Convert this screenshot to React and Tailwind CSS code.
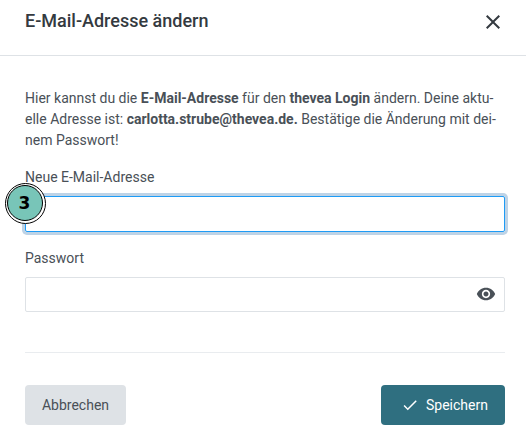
import { useState } from "react";
import { MdCheck, MdClose, MdVisibility } from "react-icons/md";

const StepBadge = ({ number }) => {
  return (
    <span className="absolute -left-[20.5px] -top-[13.5px] z-10 flex h-[41px] w-[41px] items-center justify-center rounded-full border border-black bg-white p-[1.2px]">
      <span className="flex h-full w-full items-center justify-center rounded-full border-[1.5px] border-black bg-[#78c5b8] pr-px pt-px font-['DejaVu_Sans',sans-serif] text-[17px] font-bold leading-none text-black">
        {number}
      </span>
    </span>
  );
};

const App = () => {
  let [email, setEmail] = useState("");
  let [password, setPassword] = useState("");
  let [showPassword, setShowPassword] = useState(false);

  return (
    <section className="h-[447px] w-[526px] overflow-hidden bg-white font-[Roboto,sans-serif] text-sm text-[#495057]">
      <header className="flex h-14 items-start justify-between border-b border-[#dee2e6] pl-[25px] pr-[21px]">
        <h1 className="mt-[7px] text-[18px] font-medium leading-[27px] text-[#343a40]">
          E-Mail-Adresse ändern
        </h1>
        <button type="button" aria-label="Schließen" className="mt-[10px]">
          <MdClose className="h-6 w-6 text-[#343a40]" />
        </button>
      </header>

      <form
        className="pl-[25px] pr-[21px] pt-8"
        onSubmit={(e) => e.preventDefault()}
      >
        {/* the hyphens at the line ends are fixed */}
        <p className="whitespace-nowrap leading-[21px]">
          Hier kannst du die <b className="font-bold">E-Mail-Adresse</b> für den{" "}
          <b className="font-bold">thevea Login</b> ändern. Deine aktu-
          <br />
          elle Adresse ist: <b className="font-bold">carlotta.strube@thevea.de.</b>{" "}
          Bestätige die Änderung mit dei-
          <br />
          nem Passwort!
        </p>

        <label htmlFor="email" className="mt-4 block leading-[21px]">
          Neue E-Mail-Adresse
        </label>
        <div className="relative mt-2 h-9">
          <StepBadge number={3} />
          <input
            id="email"
            type="text"
            value={email}
            onChange={(e) => setEmail(e.target.value)}
            className="block h-9 w-full rounded-[2px] border border-[#1e9bf5] px-3 shadow-[0_0_0_3px_#bed3e6] outline-none"
          />
        </div>

        <label htmlFor="password" className="mt-4 block leading-[21px]">
          Passwort
        </label>
        <div className="mt-2 flex h-[35px] items-center rounded-[2px] border border-[#dee2e6] pr-2">
          <input
            id="password"
            type={showPassword ? "text" : "password"}
            value={password}
            onChange={(e) => setPassword(e.target.value)}
            className="h-full grow px-3 outline-none"
          />
          <button
            type="button"
            aria-label="Passwort anzeigen"
            className="mb-[2px]"
            onClick={() => setShowPassword(!showPassword)}
          >
            <MdVisibility className="h-5 w-5 text-[#495057]" />
          </button>
        </div>

        <hr className="mt-10 border-[#e9ecef]" />

        <div className="mt-8 flex justify-between">
          <button
            type="button"
            className="h-10 w-[101px] rounded bg-[#dee2e6] text-[#495057]"
          >
            Abbrechen
          </button>
          <button
            type="submit"
            className="flex h-10 w-[124px] items-center rounded bg-[#2f6f80] pl-5 text-white"
          >
            <MdCheck className="mr-[7px] h-[18px] w-[18px]" />
            Speichern
          </button>
        </div>
      </form>
    </section>
  );
};

export default App;
